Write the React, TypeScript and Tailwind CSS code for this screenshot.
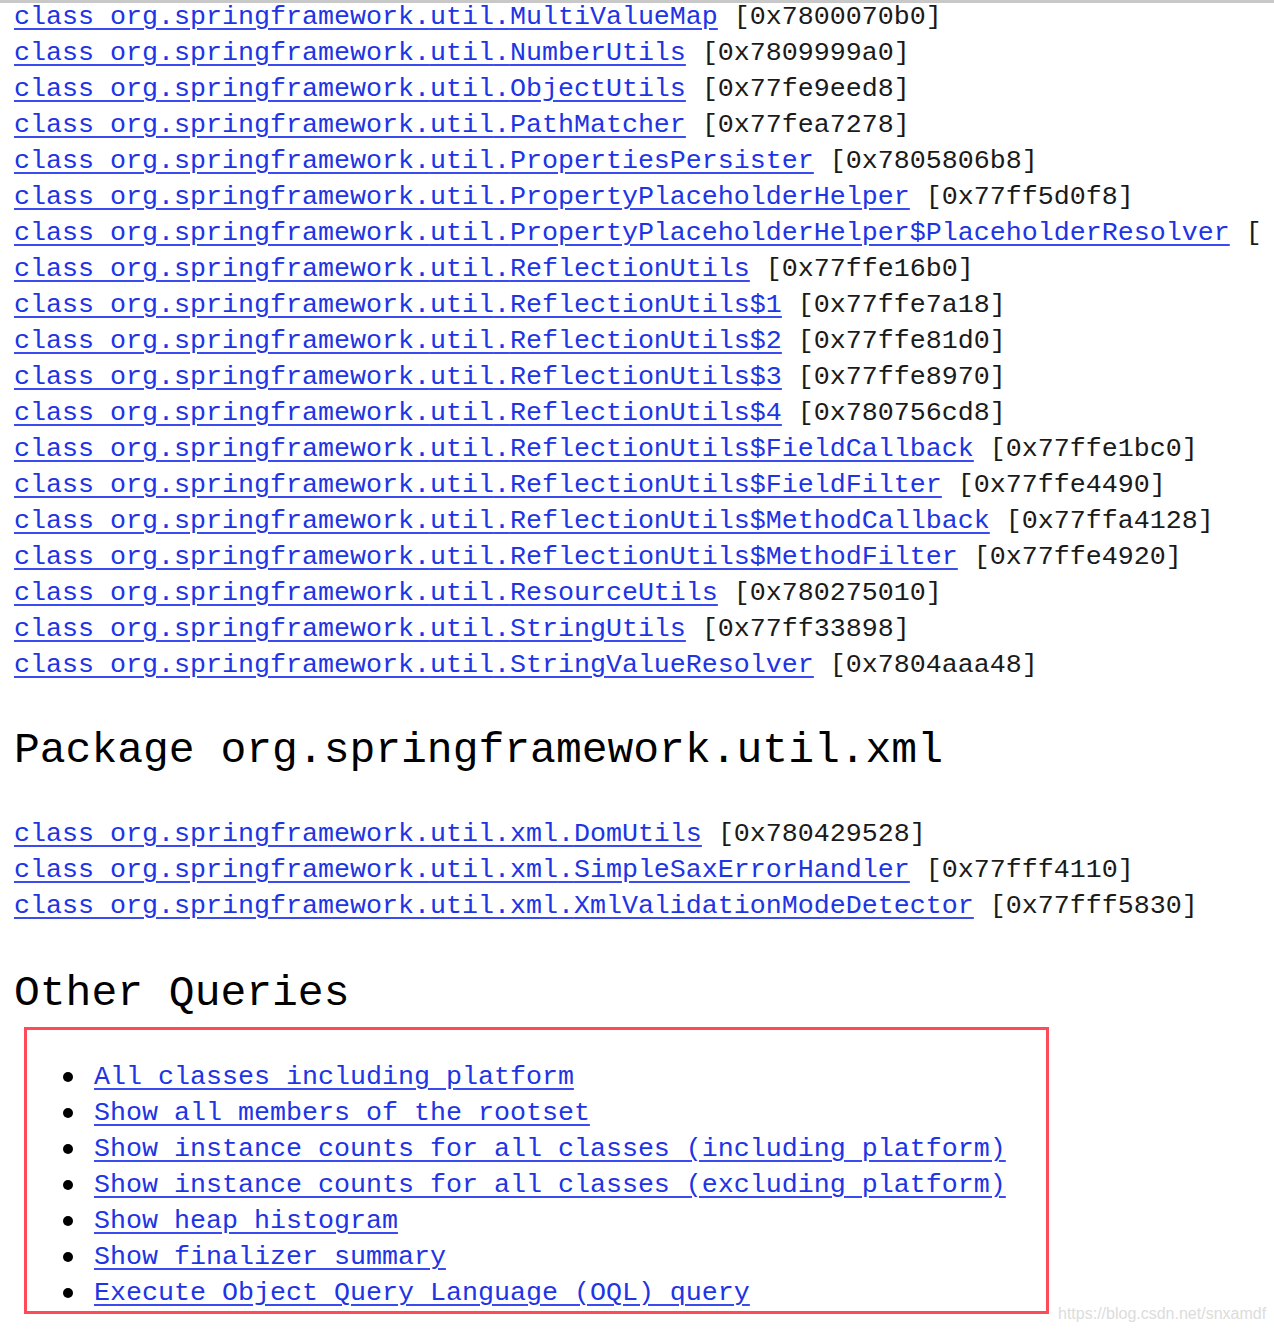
import React from 'react';

const utilClasses: [string, string][] = [
  ['MultiValueMap', '0x7800070b0'],
  ['NumberUtils', '0x7809999a0'],
  ['ObjectUtils', '0x77fe9eed8'],
  ['PathMatcher', '0x77fea7278'],
  ['PropertiesPersister', '0x7805806b8'],
  ['PropertyPlaceholderHelper', '0x77ff5d0f8'],
  ['PropertyPlaceholderHelper$PlaceholderResolver', ''],
  ['ReflectionUtils', '0x77ffe16b0'],
  ['ReflectionUtils$1', '0x77ffe7a18'],
  ['ReflectionUtils$2', '0x77ffe81d0'],
  ['ReflectionUtils$3', '0x77ffe8970'],
  ['ReflectionUtils$4', '0x780756cd8'],
  ['ReflectionUtils$FieldCallback', '0x77ffe1bc0'],
  ['ReflectionUtils$FieldFilter', '0x77ffe4490'],
  ['ReflectionUtils$MethodCallback', '0x77ffa4128'],
  ['ReflectionUtils$MethodFilter', '0x77ffe4920'],
  ['ResourceUtils', '0x780275010'],
  ['StringUtils', '0x77ff33898'],
  ['StringValueResolver', '0x7804aaa48'],
];

const xmlClasses: [string, string][] = [
  ['DomUtils', '0x780429528'],
  ['SimpleSaxErrorHandler', '0x77fff4110'],
  ['XmlValidationModeDetector', '0x77fff5830'],
];

const queries = [
  'All classes including platform',
  'Show all members of the rootset',
  'Show instance counts for all classes (including platform)',
  'Show instance counts for all classes (excluding platform)',
  'Show heap histogram',
  'Show finalizer summary',
  'Execute Object Query Language (OQL) query',
];

const linkCls = 'text-[#2034e4] underline decoration-[#3a4cf0] decoration-2 underline-offset-[4px]';

function ClassRow({ pkg, name, addr }: { pkg: string; name: string; addr: string }) {
  return (
    <div className="whitespace-nowrap leading-[36px] h-[36px]">
      <a href="#" className={linkCls}>
        class org.springframework.{pkg}.{name}
      </a>{' '}
      <span className="text-[#1a1a1a]">{addr ? `[${addr}]` : '['}</span>
    </div>
  );
}

export default function App() {
  return (
    <div
      className="relative w-[1274px] h-[1332px] overflow-hidden bg-white text-[26.67px]"
      style={{ fontFamily: '"Liberation Mono", "DejaVu Sans Mono", monospace' }}
    >
      <div className="absolute top-0 left-0 right-0 h-[3px] bg-[#c8c8c8] z-10" />

      <div className="pl-[14px] mt-[-1px]">
        {utilClasses.map(([n, a]) => (
          <ClassRow key={n} pkg="util" name={n} addr={a} />
        ))}

        <h2 className="text-[43px] leading-[50px] text-black font-normal mt-[43px] mb-[40px] whitespace-nowrap">
          Package org.springframework.util.xml
        </h2>

        {xmlClasses.map(([n, a]) => (
          <ClassRow key={n} pkg="util.xml" name={n} addr={a} />
        ))}

        <h2 className="text-[43px] leading-[50px] text-black font-normal mt-[45px] mb-[8px]">
          Other Queries
        </h2>
      </div>

      <div className="ml-[24px] w-[1025px] border-[3px] border-[#ff4a57] pt-[29px] pb-0">
        <ul>
          {queries.map((q) => (
            <li key={q} className="flex items-center h-[36px] whitespace-nowrap">
              <span className="ml-[36px] mr-[21px] w-[10px] h-[10px] rounded-full bg-black shrink-0" />
              <a href="#" className={`${linkCls} leading-[36px]`}>
                {q}
              </a>
            </li>
          ))}
        </ul>
      </div>

      <div
        className="absolute left-[1058px] top-[1303px] text-[16px] leading-[22px] text-[#dcdcdc]"
        style={{ fontFamily: '"Liberation Sans", Arial, sans-serif' }}
      >
        https://blog.csdn.net/snxamdf
      </div>
    </div>
  );
}
